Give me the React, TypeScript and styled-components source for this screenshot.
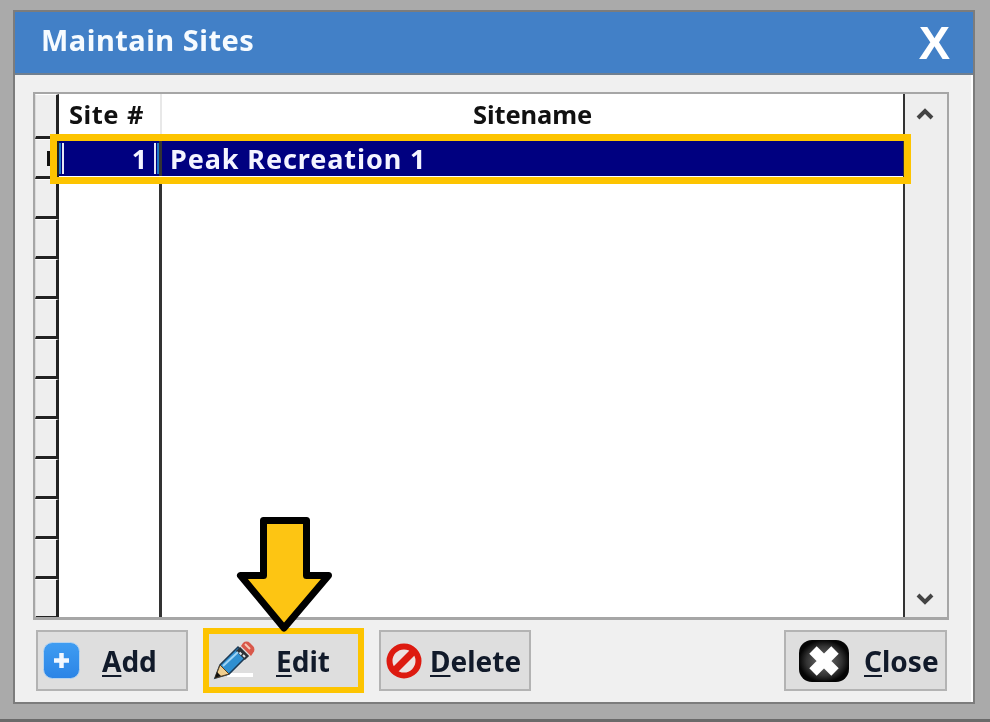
import React from "react";
import styled, { createGlobalStyle } from "styled-components";

const Global = createGlobalStyle`
  html, body { margin: 0; padding: 0; background: #aaaaaa; }
  * { box-sizing: border-box; }
`;

const FONT = `"Noto Sans", "Open Sans", "Liberation Sans", sans-serif`;

const Page = styled.div`
  position: relative;
  width: 990px;
  height: 722px;
  padding: 10px 15px 0 13px;
  background: #aaaaaa;
  border-bottom: 3px solid #6a6a6a;
  overflow: hidden;
  font-family: ${FONT};
  filter: blur(0.5px);
`;

const Window = styled.div`
  display: flex;
  flex-direction: column;
  height: 694px;
  border: 2px solid #7c7c7c;
  background: #f0f0f0;
`;

const TitleBar = styled.div`
  flex: none;
  display: flex;
  align-items: center;
  justify-content: space-between;
  height: 63px;
  padding: 0 23px 0 26px;
  background: #4280c7;
  border-bottom: 2px solid #6f7f90;
  color: #fff;
`;

const Title = styled.div`
  margin-bottom: 6px;
  font-size: 29px;
  font-weight: 700;
  letter-spacing: 0.5px;
  color: #f6fbff;
`;

const CloseGlyph = styled.div`
  font-family: "Liberation Sans", sans-serif;
  font-size: 47px;
  line-height: 1;
  font-weight: 700;
`;

const Body = styled.div`
  flex: 1;
  display: flex;
  flex-direction: column;
  gap: 8px;
  padding: 17px 22px 0 18px;
  border-right: 2px solid #fff;
`;

const Grid = styled.div`
  flex: none;
  display: flex;
  height: 528px;
  border: 2px solid #a6a6a6;
  border-bottom-width: 3px;
  background: #fff;
  overflow: hidden;
`;

const Rows = styled.div`
  flex: 1;
  display: flex;
  flex-direction: column;
  border-right: 2px solid #333;
`;

const Row = styled.div<{ $header?: boolean }>`
  flex: none;
  display: grid;
  grid-template-columns: 24px 103px 1fr;
  height: ${(p) => (p.$header ? 45 : 40)}px;
`;

const Indicator = styled.div`
  display: flex;
  align-items: center;
  justify-content: flex-end;
  background: #eeeeee;
  border: 1px solid #fff;
  border-left-color: #dcdcdc;
  border-right: 3px solid #222;
  border-bottom: 3px solid #222;
`;

const Marker = styled.span`
  width: 5px;
  height: 15px;
  background: #111;
  margin-right: 4px;
`;

const HeaderCell = styled.div<{ $center?: boolean }>`
  display: flex;
  align-items: center;
  justify-content: ${(p) => (p.$center ? "center" : "flex-start")};
  padding-left: ${(p) => (p.$center ? 0 : 10)}px;
  padding-bottom: 6px;
  font-size: 25.5px;
  font-weight: 700;
  color: #111;
  letter-spacing: ${(p) => (p.$center ? -0.1 : 0.5)}px;
  word-spacing: ${(p) => (p.$center ? 0 : 1)}px;
  border-right: ${(p) => (p.$center ? 0 : 2)}px solid #e8e8e8;
`;

const Cell = styled.div<{ $selected?: boolean; $right?: boolean }>`
  position: relative;
  display: flex;
  align-items: center;
  justify-content: ${(p) => (p.$right ? "flex-end" : "flex-start")};
  padding: ${(p) => (p.$right ? "0 11px 0 0" : "0 0 0 8px")};
  font-size: 27px;
  font-weight: 700;
  letter-spacing: 0.9px;
  color: #f4f4ff;
  height: ${(p) => (p.$selected ? 35 : 40)}px;
  margin-top: ${(p) => (p.$selected ? 2 : 0)}px;
  background: ${(p) => (p.$selected ? "#000080" : "transparent")};
  border-right: ${(p) => (p.$right ? "3px solid #333" : "none")};
`;

const FocusMark = styled.span<{ $side: "left" | "right" }>`
  position: absolute;
  top: 2px;
  bottom: 2px;
  ${(p) => p.$side}: 3px;
  width: 2px;
  background: #e6e6f4;
  box-shadow: ${(p) => (p.$side === "left" ? "-3px 0 0 #1f77c8" : "3px 0 0 #1f77c8")};
`;

const Scrollbar = styled.div`
  flex: none;
  display: flex;
  flex-direction: column;
  justify-content: space-between;
  align-items: center;
  width: 42px;
  padding: 13px 2px 11px 0;
  background: #eeeeee;
  color: #444;
`;

const ButtonRow = styled.div`
  flex: none;
  display: flex;
  align-items: center;
  gap: 15px;
  height: 65px;
  padding: 0 2px 0 3px;
`;

const Button = styled.button<{ $w: number; $pad: number; $gap: number; $active?: boolean; $end?: boolean }>`
  display: flex;
  align-items: center;
  gap: ${(p) => p.$gap}px;
  width: ${(p) => p.$w}px;
  height: ${(p) => (p.$active ? 65 : 61)}px;
  margin: 0 0 0 ${(p) => (p.$end ? "auto" : "0")};
  padding: 0 0 0 ${(p) => p.$pad}px;
  background: #dedede;
  border: ${(p) => (p.$active ? "6px solid #fdc400" : "2px solid #b3b3b3")};
  font-family: ${FONT};
  font-size: 28px;
  font-weight: 700;
  color: #111a2a;
`;

const Mnemonic = styled.span`
  text-decoration: underline;
  text-decoration-thickness: 2px;
  text-underline-offset: 3px;
`;

const RowHighlight = styled.div`
  position: absolute;
  left: 50px;
  top: 134px;
  width: 861px;
  height: 50px;
  border: 7px solid #fdc400;
  pointer-events: none;
`;

const Arrow = styled.svg`
  position: absolute;
  left: 232px;
  top: 512px;
  pointer-events: none;
`;

const AddIcon = () => (
  <svg width="37" height="37" viewBox="0 0 37 37">
    <defs>
      <linearGradient id="addFill" x1="0" y1="0" x2="0" y2="1">
        <stop offset="0" stopColor="#3f9df2" />
        <stop offset="1" stopColor="#2b84e6" />
      </linearGradient>
    </defs>
    <rect x="0.5" y="0.5" width="36" height="36" rx="9" fill="url(#addFill)" stroke="#b5d3ef" />
    <path d="M18.5 11v15M11 18.5h15" stroke="#f2f8ff" strokeWidth="4.5" />
  </svg>
);

const PencilIcon = () => (
  <svg width="44" height="40" viewBox="0 0 44 40">
    <path d="M15 34h26" stroke="#fff" strokeWidth="4" />
    <path d="M3 37l5-13L26 6l9 9-18 18z" fill="#2f8fd0" stroke="#1c3a55" strokeWidth="1.5" />
    <path d="M3 37l5-13 9 9z" fill="#f0cf90" stroke="#5a4020" strokeWidth="1" />
    <path d="M3 37l2-6 4 4z" fill="#111" />
    <path d="M29 5l10 10 2-3a5 5 0 0 0 0-7l-3-3a5 5 0 0 0-7 0z" fill="#d9584a" />
    <path d="M33 3l5 5" stroke="#f5c9b8" strokeWidth="2" />
    <path d="M26 8l9 9" stroke="#2c3238" strokeWidth="6" />
    <path d="M27.5 11.5l2 2M31 14l2 2" stroke="#dfe6ec" strokeWidth="2" />
    <path d="M11 25L26 11" stroke="#9fd4f5" strokeWidth="2" />
  </svg>
);

const DeleteIcon = () => (
  <svg width="36" height="36" viewBox="0 0 36 36">
    <circle cx="18" cy="18" r="14.5" fill="#ece2e2" stroke="#dd1a10" strokeWidth="6" />
    <path d="M8 28L28 8" stroke="#dd1a10" strokeWidth="7" />
  </svg>
);

const CloseIcon = () => (
  <svg width="50" height="42" viewBox="0 0 50 42">
    <defs>
      <radialGradient id="closeFill">
        <stop offset="0" stopColor="#777" />
        <stop offset="0.7" stopColor="#333" />
        <stop offset="1" stopColor="#050505" />
      </radialGradient>
    </defs>
    <rect width="50" height="42" rx="13" fill="url(#closeFill)" />
    <path d="M14 10l22 22M36 10L14 32" stroke="#fff" strokeWidth="10.5" />
  </svg>
);

const Chevron = ({ up }: { up?: boolean }) => (
  <svg width="20" height="14" viewBox="0 0 20 14">
    <path d={up ? "M3 11l7-7 7 7" : "M3 3l7 7 7-7"} fill="none" stroke="currentColor" strokeWidth="4" />
  </svg>
);

const EMPTY_ROWS = Array.from({ length: 11 }, (_, i) => i);

export default function App() {
  return (
    <Page>
      <Global />
      <Window>
        <TitleBar>
          <Title>Maintain Sites</Title>
          <CloseGlyph>X</CloseGlyph>
        </TitleBar>
        <Body>
          <Grid>
            <Rows>
              <Row $header>
                <Indicator />
                <HeaderCell>Site #</HeaderCell>
                <HeaderCell $center>Sitename</HeaderCell>
              </Row>
              <Row>
                <Indicator>
                  <Marker />
                </Indicator>
                <Cell $selected $right>
                  <FocusMark $side="left" />
                  1
                  <FocusMark $side="right" />
                </Cell>
                <Cell $selected>Peak Recreation 1</Cell>
              </Row>
              {EMPTY_ROWS.map((i) => (
                <Row key={i}>
                  <Indicator />
                  <Cell $right />
                  <Cell />
                </Row>
              ))}
            </Rows>
            <Scrollbar>
              <Chevron up />
              <Chevron />
            </Scrollbar>
          </Grid>
          <ButtonRow>
            <Button $w={152} $pad={5} $gap={22}>
              <AddIcon />
              <span><Mnemonic>A</Mnemonic>dd</span>
            </Button>
            <Button $w={161} $pad={3} $gap={20} $active>
              <PencilIcon />
              <span><Mnemonic>E</Mnemonic>dit</span>
            </Button>
            <Button $w={152} $pad={5} $gap={8}>
              <DeleteIcon />
              <span><Mnemonic>D</Mnemonic>elete</span>
            </Button>
            <Button $w={163} $pad={13} $gap={15} $end>
              <CloseIcon />
              <span><Mnemonic>C</Mnemonic>lose</span>
            </Button>
          </ButtonRow>
        </Body>
      </Window>
      <RowHighlight />
      <Arrow width="106" height="128" viewBox="0 0 106 128">
        <path d="M31.5 8.5h43v55h22L52 116 8.5 63.5h23z" fill="#fdc513" stroke="#000" strokeWidth="7" strokeLinejoin="round" />
      </Arrow>
    </Page>
  );
}
